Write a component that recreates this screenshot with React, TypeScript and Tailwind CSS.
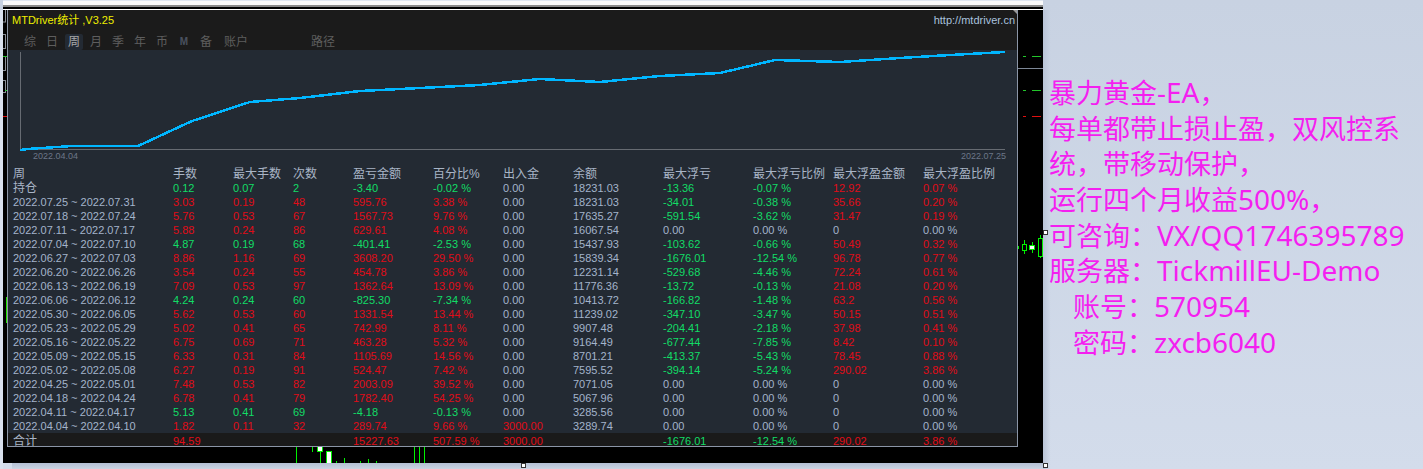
const rows: string[][] = [
  ['2022.07.25 ~ 2022.07.31', '3.03', '0.19', '48', '595.76', '3.38 %', '0.00', '18231.03', '-34.01', '-0.38 %', '35.66', '0.20 %'],
  ['2022.07.18 ~ 2022.07.24', '5.76', '0.53', '67', '1567.73', '9.76 %', '0.00', '17635.27', '-591.54', '-3.62 %', '31.47', '0.19 %'],
  ['2022.07.11 ~ 2022.07.17', '5.88', '0.24', '86', '629.61', '4.08 %', '0.00', '16067.54', '0.00', '0.00 %', '0', '0.00 %'],
  ['2022.07.04 ~ 2022.07.10', '4.87', '0.19', '68', '-401.41', '-2.53 %', '0.00', '15437.93', '-103.62', '-0.66 %', '50.49', '0.32 %'],
  ['2022.06.27 ~ 2022.07.03', '8.86', '1.16', '69', '3608.20', '29.50 %', '0.00', '15839.34', '-1676.01', '-12.54 %', '96.78', '0.77 %'],
  ['2022.06.20 ~ 2022.06.26', '3.54', '0.24', '55', '454.78', '3.86 %', '0.00', '12231.14', '-529.68', '-4.46 %', '72.24', '0.61 %'],
  ['2022.06.13 ~ 2022.06.19', '7.09', '0.53', '97', '1362.64', '13.09 %', '0.00', '11776.36', '-13.72', '-0.13 %', '21.08', '0.20 %'],
  ['2022.06.06 ~ 2022.06.12', '4.24', '0.24', '60', '-825.30', '-7.34 %', '0.00', '10413.72', '-166.82', '-1.48 %', '63.2', '0.56 %'],
  ['2022.05.30 ~ 2022.06.05', '5.62', '0.53', '60', '1331.54', '13.44 %', '0.00', '11239.02', '-347.10', '-3.47 %', '50.15', '0.51 %'],
  ['2022.05.23 ~ 2022.05.29', '5.02', '0.41', '65', '742.99', '8.11 %', '0.00', '9907.48', '-204.41', '-2.18 %', '37.98', '0.41 %'],
  ['2022.05.16 ~ 2022.05.22', '6.75', '0.69', '71', '463.28', '5.32 %', '0.00', '9164.49', '-677.44', '-7.85 %', '8.42', '0.10 %'],
  ['2022.05.09 ~ 2022.05.15', '6.33', '0.31', '84', '1105.69', '14.56 %', '0.00', '8701.21', '-413.37', '-5.43 %', '78.45', '0.88 %'],
  ['2022.05.02 ~ 2022.05.08', '6.27', '0.19', '91', '524.47', '7.42 %', '0.00', '7595.52', '-394.14', '-5.24 %', '290.02', '3.86 %'],
  ['2022.04.25 ~ 2022.05.01', '7.48', '0.53', '82', '2003.09', '39.52 %', '0.00', '7071.05', '0.00', '0.00 %', '0', '0.00 %'],
  ['2022.04.18 ~ 2022.04.24', '6.78', '0.41', '79', '1782.40', '54.25 %', '0.00', '5067.96', '0.00', '0.00 %', '0', '0.00 %'],
  ['2022.04.11 ~ 2022.04.17', '5.13', '0.41', '69', '-4.18', '-0.13 %', '0.00', '3285.56', '0.00', '0.00 %', '0', '0.00 %'],
  ['2022.04.04 ~ 2022.04.10', '1.82', '0.11', '32', '289.74', '9.66 %', '3000.00', '3289.74', '0.00', '0.00 %', '0', '0.00 %'],
]

const holding = ['持仓', '0.12', '0.07', '2', '-3.40', '-0.02 %', '0.00', '18231.03', '-13.36', '-0.07 %', '12.92', '0.07 %']
const total = ['合计', '94.59', '', '', '15227.63', '507.59 %', '3000.00', '', '-1676.01', '-12.54 %', '290.02', '3.86 %']
const headers = ['周', '手数', '最大手数', '次数', '盈亏金额', '百分比%', '出入金', '余额', '最大浮亏', '最大浮亏比例', '最大浮盈金额', '最大浮盈比例']

const tabs = ['综', '日', '周', '月', '季', '年', '币', 'M', '备']

const curve =
  '12,100 20,99 34,98 49,97 64,96 130,96 184,71 242,52 292,48 352,41 412,38 472,35 532,29 592,32 652,26 712,23 767,10 832,12 892,8 942,5 997,2'

const gridCols = 'grid grid-cols-[160px_60px_60px_60px_80px_70px_70px_90px_90px_80px_90px_1fr] pl-[5px]'

function cellColor(row: string[], i: number) {
  if (i === 0) return 'text-[12px] text-[#a9b5c6]'
  if (i === 7) return 'text-[#a3b4cb]'
  // lots and counts follow the sign of the row's profit
  const v = i <= 3 ? row[4] : row[i]
  if (v.startsWith('-')) return 'text-[#12dc66]'
  return parseFloat(v) === 0 ? 'text-[#a3b4cb]' : 'text-[#e00c18]'
}

function Row({ row, className = 'h-[14px]' }: { row: string[]; className?: string }) {
  return (
    <div className={`${gridCols} ${className} items-center leading-[14px]`}>
      {row.map((v, i) => (
        <div key={i} className={`whitespace-nowrap ${i === 0 && row !== holding && row !== total ? 'text-[#a3b4cb]' : cellColor(row, i)}`}>
          {v}
        </div>
      ))}
    </div>
  )
}

function LeftStrip() {
  return (
    <svg className="h-[453px] w-[4px] shrink-0" viewBox="0 0 4 453" aria-hidden>
      <g fill="none" stroke="#8a8f98">
        <rect x="-2" y="-2" width="4.5" height="14" />
        <rect x="-2" y="24.5" width="4.5" height="14" />
        <rect x="-2" y="46.5" width="4.5" height="14" />
        <rect x="-2" y="70.5" width="4.5" height="12" />
      </g>
      <rect x="0" y="46" width="4" height="1" fill="#22c02a" />
      <rect x="2" y="80" width="2" height="1" fill="#22c02a" />
      <rect x="0" y="106" width="4" height="1" fill="#e01010" />
      <rect x="3" y="287" width="1" height="26" fill="#22e000" />
    </svg>
  )
}

function RightStrip() {
  return (
    <svg className="h-[453px] w-[25px] shrink-0" viewBox="1018 10 25 453" shapeRendering="crispEdges" aria-hidden>
      <rect x="1018" y="68" width="25" height="1" fill="#7d8796" />
      <g fill="#22c52a">
        <rect x="1023" y="56" width="3" height="1" />
        <rect x="1032" y="56" width="9" height="1" />
        <rect x="1023" y="90" width="3" height="1" />
        <rect x="1032" y="90" width="9" height="1" />
      </g>
      <g fill="#e01010">
        <rect x="1023" y="116" width="3" height="1" />
        <rect x="1032" y="116" width="9" height="1" />
      </g>
      <g fill="#00f000">
        <rect x="1018" y="246" width="1" height="3" />
        <rect x="1024" y="240" width="1" height="14" />
        <rect x="1032" y="242" width="1" height="11" />
        <rect x="1040" y="235" width="1" height="23" />
      </g>
      <rect x="1022.5" y="244.5" width="4" height="6" fill="#000" stroke="#00f000" />
      <rect x="1029.5" y="245.5" width="5" height="4" fill="#fff" stroke="#00f000" />
      <rect x="1038.5" y="238.5" width="4" height="18" fill="#000" stroke="#00f000" />
    </svg>
  )
}

function BottomStrip() {
  return (
    <svg className="h-[16px] w-[1040px]" viewBox="3 447 1040 16" shapeRendering="crispEdges" aria-hidden>
      <g fill="#00f000">
        <rect x="296" y="447" width="1" height="16" />
        <rect x="312" y="447" width="1" height="5" />
        <rect x="320" y="447" width="1" height="16" />
        <rect x="336" y="461" width="1" height="2" />
        <rect x="344" y="458" width="1" height="5" />
        <rect x="360" y="461" width="1" height="2" />
        <rect x="368" y="459" width="1" height="4" />
        <rect x="376" y="461" width="1" height="2" />
        <rect x="414" y="447" width="1" height="16" />
        <rect x="419" y="447" width="1" height="16" />
        <rect x="424" y="447" width="1" height="16" />
      </g>
      <rect x="317.5" y="446.5" width="5" height="5" fill="#fff" stroke="#00f000" />
      <rect x="326.5" y="451.5" width="5" height="12" fill="#fff" stroke="#00f000" />
    </svg>
  )
}

function Handle({ className }: { className: string }) {
  return <div className={`absolute h-[5px] w-[5px] border border-[#333] bg-white ${className}`} />
}

function Lat({ children }: { children: string }) {
  return <span className="text-[28px]">{children}</span>
}

export default function App() {
  return (
    <div className="relative flex h-[469px] w-[1423px] flex-col overflow-hidden bg-gradient-to-b from-[#c8d2e2] to-[#d3dceb] font-['Liberation_Sans','Noto_Sans_CJK_SC',sans-serif]">
      <div className="ml-[3px] h-[10px] w-[1040px] shrink-0 bg-[linear-gradient(#dfe6f1_0,#dfe6f1_1px,#fafafa_1px,#fafafa_5px,#8a8a8a_5px,#8a8a8a_7px,#000_7px,#000_9px,#fff_9px)]" />
      <div className="flex flex-1">
        <div className="w-[3px] shrink-0 bg-[#d9e1ee]" />
        <div className="h-[453px] w-[1040px] shrink-0 bg-black">
          <div className="flex h-[437px]">
            <LeftStrip />
            <div className="relative flex w-[1011px] shrink-0 flex-col overflow-hidden border-r border-b border-l border-[#8b95a6] bg-[#232a33] text-[11px]">
              <div className="flex h-[23px] shrink-0 items-center justify-between bg-[#1b1b1b] pb-[3px] pl-[4px] pr-[2px]">
                <span className="text-[#eeee00]">MTDriver统计 ,V3.25</span>
                <span className="text-[#a9c2de]">http://mtdriver.cn</span>
              </div>
              <div className="flex h-[17px] shrink-0 items-center bg-[#1b1b1b] pl-[11px] text-[12px] text-[#5e5e5e]">
                {tabs.map((t) => (
                  <div
                    key={t}
                    className={
                      t === 'M'
                        ? 'flex h-[16px] w-[22px] items-center justify-center text-[10px] font-bold text-[#4a5260]'
                        : 'flex h-[16px] w-[22px] items-center justify-center'
                    }
                  >
                    {t === '周' ? (
                      <span className="flex h-[16px] w-[18px] items-center justify-center rounded-[2px] bg-[#232a33] text-[#a8a8a8]">
                        {t}
                      </span>
                    ) : (
                      t
                    )}
                  </div>
                ))}
                <span className="ml-[7px] w-[87px]">账户</span>
                <span>路径</span>
              </div>
              <svg className="h-[101px] w-full shrink-0" viewBox="0 0 1009 101" shapeRendering="crispEdges" aria-hidden>
                <rect x="12" y="2" width="1" height="98" fill="#666b72" />
                <rect x="12" y="99" width="985" height="1" fill="#666b72" />
                <polyline points={curve} fill="none" stroke="#00b6ff" strokeWidth="2.5" />
              </svg>
              <div className="flex h-[11px] shrink-0 items-center justify-between pl-[25px] pr-[11px] text-[9px] text-[#6c7788]">
                <span>2022.04.04</span>
                <span>2022.07.25</span>
              </div>
              <div className="h-[4px] shrink-0" />
              <div className={`${gridCols} h-[15px] shrink-0 items-center pt-[1px] text-[12px] leading-[15px] text-[#a9b5c6]`}>
                {headers.map((h) => (
                  <div key={h} className="whitespace-nowrap">
                    {h}
                  </div>
                ))}
              </div>
              <Row row={holding} />
              {rows.map((r) => (
                <Row key={r[0]} row={r} />
              ))}
              <Row row={total} className="h-[14px] bg-[#1a1a1a] pt-[1px]" />
              <svg className="absolute top-[-4px] right-0 h-[8px] w-[4px]" viewBox="0 0 4 8" aria-hidden>
                <polygon points="0,4 4,0 4,8" fill="#9a9a9a" />
              </svg>
            </div>
            <RightStrip />
          </div>
          <BottomStrip />
        </div>
        <div className="flex-1 whitespace-nowrap bg-gradient-to-r from-[#b9c4d7] from-0% to-transparent to-[2%] pl-[6px] pt-[65px] font-['Noto_Sans','Noto_Sans_CJK_SC',sans-serif] text-[27px] leading-[35.7px] text-[#f41ff0]">
          <div className="h-[35.7px]">暴力黄金<Lat>-EA</Lat>，</div>
          <div className="h-[35.7px]">每单都带止损止盈，双风控系</div>
          <div className="h-[35.7px]">统，带移动保护，</div>
          <div className="h-[35.7px]">运行四个月收益<Lat>500%</Lat>，</div>
          <div className="h-[35.7px]">可咨询：<Lat>VX/QQ1746395789</Lat></div>
          <div className="h-[35.7px]">服务器：<Lat>TickmillEU-Demo</Lat></div>
          <div className="h-[35.7px] pl-6">账号：<Lat>570954</Lat></div>
          <div className="h-[35.7px] pl-6">密码：<Lat>zxcb6040</Lat></div>
        </div>
      </div>
      <div className="absolute top-[463px] left-[12px] h-[6px] w-[1031px] bg-gradient-to-b from-[#b4c0d4] to-[#cbd4e3]" />
      <Handle className="top-[230px] left-[1043px]" />
      <Handle className="top-[463px] left-[521px]" />
      <Handle className="top-[463px] left-[1043px]" />
    </div>
  )
}
